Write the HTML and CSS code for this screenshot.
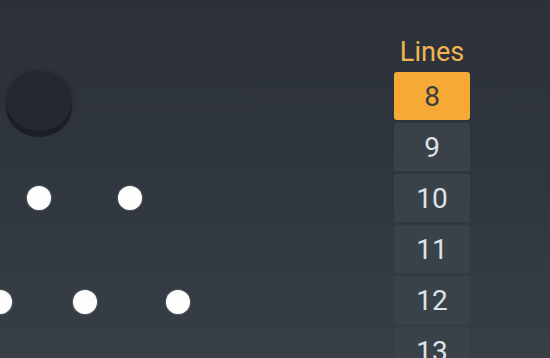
FILE: index.html
```html
<!DOCTYPE html>
<html lang="en">
  <head>
    <meta name="viewport" content="width=device-width, initial-scale=1">
    <link rel="stylesheet" href="styles.css">
    <title>Plinko</title>
  </head>
  <body>
    <div class="game">
      <!-- board: pegs and puck sit at their own spots -->
      <div class="board">
        <div class="puck"></div>
        <span class="peg" style="left: 27px; top: 186px;"></span>
        <span class="peg" style="left: 118px; top: 186px;"></span>
        <span class="peg" style="left: -12px; top: 290px;"></span>
        <span class="peg" style="left: 73px; top: 290px;"></span>
        <span class="peg" style="left: 166px; top: 290px;"></span>
      </div>

      <div class="linesPanel">
        <div class="linesLabel">Lines</div>
        <button class="lineButton active">8</button>
        <button class="lineButton">9</button>
        <button class="lineButton">10</button>
        <button class="lineButton">11</button>
        <button class="lineButton">12</button>
        <button class="lineButton">13</button>
      </div>
    </div>
  </body>
</html>
```
FILE: styles.css
```css
html, body {
  margin: 0;
  height: 100%;
  overflow: hidden;
}

body {
  font-family: Roboto, "Liberation Sans", Arial, sans-serif;
  background: linear-gradient(180deg, #2c3139 0%, #30363d 50%, #383e45 100%);
}

.game {
  display: flex;
  height: 100%;
}

.board {
  position: relative;
  flex: 1;
}

.puck {
  position: absolute;
  left: 6px;
  top: 71px;
  width: 66px;
  height: 60px;
  border-radius: 50%;
  background: #24282f;
  box-shadow: 0 6px 0 #1b1e24, 0 0 6px rgba(0, 0, 0, 0.25);
}

.peg {
  position: absolute;
  width: 24px;
  height: 24px;
  border-radius: 50%;
  background: #fdfdfd;
  box-shadow: 0 0 2px rgba(255, 255, 255, 0.5);
}

.linesPanel {
  width: 76px;
  margin-right: 80px;
  padding-top: 36px;
  display: flex;
  flex-direction: column;
  gap: 3px;
}

.linesLabel {
  color: #f1b552;
  font-size: 27px;
  text-align: center;
  line-height: 32px;
  margin-bottom: 1px;
}

.lineButton {
  flex: none;
  height: 48px;
  border: none;
  border-radius: 3px;
  background-color: #3a4149;
  color: #dde2e6;
  font-family: inherit;
  font-size: 28px;
  padding: 0;
  cursor: pointer;
}

.lineButton.active {
  background-color: #f6a935;
  color: #393d43;
}
```
